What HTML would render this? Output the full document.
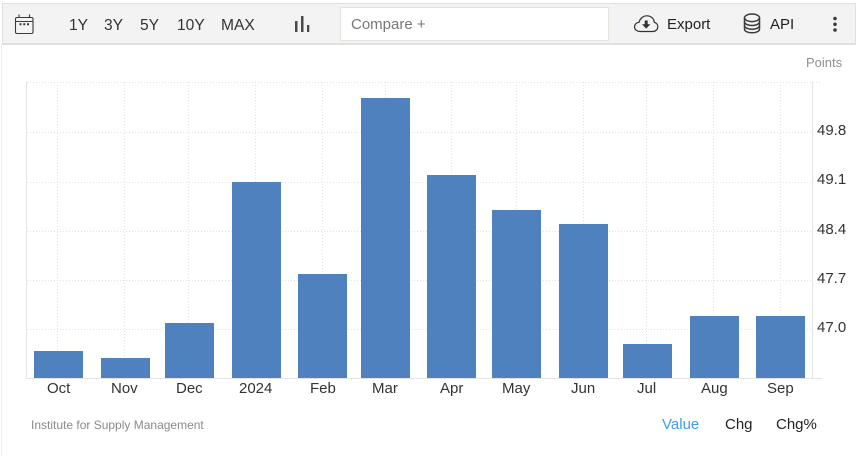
<!DOCTYPE html>
<html>
<head>
<meta charset="utf-8">
<style>
html,body{margin:0;padding:0;background:#fff;width:856px;height:456px;overflow:hidden}
body{font-family:"Liberation Sans",sans-serif;position:relative}
.t{position:absolute;white-space:nowrap;line-height:16px;height:16px}
.m{font-size:15px;color:#333;top:381px}
.y{font-size:15px;color:#333;left:817px}
.r{font-size:15.6px;color:#333;top:18px}
#bar{position:absolute;left:2px;top:3px;width:852px;height:39px;background:#f3f3f3;border:1px solid #e0e0e0;border-width:1px 1px 2px 1px}
#inp{position:absolute;left:340px;top:7px;width:267px;height:32px;background:#fff;border:1px solid #e4e4dc}
#lb{position:absolute;left:1px;top:44px;width:1px;height:412px;background:#efefef}
svg{position:absolute;left:0;top:0}
</style>
</head>
<body>
<div id="bar"></div>
<div id="inp"></div>
<div id="lb"></div>
<svg width="856" height="456" viewBox="0 0 856 456">
  <g stroke="#e2e2e2" stroke-width="1" stroke-dasharray="1 2" fill="none">
    <path d="M27 82.500H822M27 132.500H812M27 182.500H812M27 231.500H812M27 280.500H812M27 329.500H812"/>
    <path d="M57.500 82V378M124.500 82V378M188.500 82V378M255.500 82V378M322.500 82V378M385.500 82V378M451.500 82V378M516.500 82V378M583.500 82V378M646.500 82V378M713.500 82V378M780.500 82V378"/>
  </g>
  <path d="M26.500 82V378.500M812.500 82V378.500M26 378.500H822" stroke="#e3e3e3" stroke-width="1" fill="none"/>
  <g fill="#4e81bd">
    <rect x="34" y="351" width="49" height="27"/>
    <rect x="101" y="358" width="49" height="20"/>
    <rect x="165" y="323" width="49" height="55"/>
    <rect x="232" y="182" width="49" height="196"/>
    <rect x="298" y="274" width="49" height="104"/>
    <rect x="361" y="98" width="49" height="280"/>
    <rect x="427" y="175" width="49" height="203"/>
    <rect x="492" y="210" width="49" height="168"/>
    <rect x="559" y="224" width="49" height="154"/>
    <rect x="623" y="344" width="49" height="34"/>
    <rect x="690" y="316" width="49" height="62"/>
    <rect x="756" y="316" width="49" height="62"/>
  </g>
  <!-- calendar -->
  <g fill="none" stroke="#3a3a3a" stroke-width="1.100">
    <rect x="15.500" y="17.500" width="17.500" height="16" rx="1.500"/>
    <path d="M15.500 21.500H33M19 14.500V17.500M29.500 14.500V17.500"/>
  </g>
  <path d="M19.500 23.300h2v2h-2zM23.300 23.300h2v2h-2zM27 23.300h2v2h-2z" fill="#3a3a3a"/>
  <!-- bars icon -->
  <g fill="#4a4a4a">
    <rect x="295" y="21" width="2.500" height="11"/>
    <rect x="301" y="16" width="2.500" height="16"/>
    <rect x="307" y="25" width="2.300" height="7"/>
  </g>
  <!-- cloud -->
  <path d="M640.500 31.500C636.500 31.500 634.500 29.300 634.500 26.800C634.500 24.300 636.500 22.500 639 22.300C640 18.500 643 15.800 647 15.800C651 15.800 654 18.700 654.300 22.400C656.400 22.800 657.800 24.600 657.800 26.700C657.800 29.300 655.800 31.500 652.800 31.500Z" fill="none" stroke="#333" stroke-width="1.200"/>
  <path d="M644.700 20.500H647.700V24.300H650.400L646.200 28.600L642 24.300H644.700Z" fill="#333"/>
  <!-- database -->
  <g fill="none" stroke="#3a3a3a" stroke-width="1.500">
    <ellipse cx="752" cy="17.800" rx="7.500" ry="3.800"/>
    <path d="M744.500 17.800V29C744.500 31.300 747.800 32.800 752 32.800C756.200 32.800 759.500 31.300 759.500 29V17.800"/>
    <path d="M744.500 21.800C744.500 24 747.800 25.500 752 25.500C756.200 25.500 759.500 24 759.500 21.800"/>
    <path d="M744.500 25.500C744.500 27.700 747.800 29.200 752 29.200C756.200 29.200 759.500 27.700 759.500 25.500"/>
  </g>
  <!-- dots -->
  <g fill="#3a3a3a">
    <circle cx="835" cy="18.500" r="1.800"/>
    <circle cx="835" cy="24.300" r="1.800"/>
    <circle cx="835" cy="30" r="1.800"/>
  </g>
</svg>

<div class="t r" style="left:69px">1Y</div>
<div class="t r" style="left:104px">3Y</div>
<div class="t r" style="left:140px">5Y</div>
<div class="t r" style="left:177px">10Y</div>
<div class="t r" style="left:221px">MAX</div>
<div class="t" style="left:351px;top:17px;font-size:15px;color:#777">Compare +</div>
<div class="t" style="left:667px;top:17px;font-size:15px;color:#222">Export</div>
<div class="t" style="left:770px;top:17px;font-size:15px;color:#222">API</div>
<div class="t" style="left:806px;top:55px;font-size:13px;color:#909090">Points</div>

<div class="t y" style="top:123px">49.8</div>
<div class="t y" style="top:172px">49.1</div>
<div class="t y" style="top:222px">48.4</div>
<div class="t y" style="top:271px">47.7</div>
<div class="t y" style="top:320px">47.0</div>

<div class="t m" style="left:47px">Oct</div>
<div class="t m" style="left:111px">Nov</div>
<div class="t m" style="left:176px">Dec</div>
<div class="t m" style="left:239px">2024</div>
<div class="t m" style="left:310px">Feb</div>
<div class="t m" style="left:372px">Mar</div>
<div class="t m" style="left:440px">Apr</div>
<div class="t m" style="left:502px">May</div>
<div class="t m" style="left:571px">Jun</div>
<div class="t m" style="left:637px">Jul</div>
<div class="t m" style="left:701px">Aug</div>
<div class="t m" style="left:767px">Sep</div>

<div class="t" style="left:31px;top:417px;font-size:12px;color:#8a8a8a">Institute for Supply Management</div>
<div class="t" style="left:662px;top:417px;font-size:15px;color:#3d9bf5">Value</div>
<div class="t" style="left:725px;top:417px;font-size:15px;color:#222">Chg</div>
<div class="t" style="left:776px;top:417px;font-size:15px;color:#222">Chg%</div>
</body>
</html>
